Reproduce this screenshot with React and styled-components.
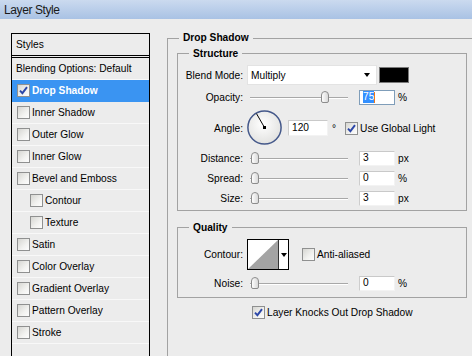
import React from 'react';
import styled, { createGlobalStyle } from 'styled-components';

const Global = createGlobalStyle`
  html, body { margin: 0; padding: 0; background: #ececec; }
  body {
    font-family: "Liberation Sans", Arial, sans-serif;
    font-size: 10.2px;
    color: #000;
  }
`;

const Window = styled.div`
  width: 472px;
  height: 356px;
  overflow: hidden;
  background: #ececec;
  display: flex;
  flex-direction: column;
`;

const TitleBar = styled.div`
  height: 19px;
  flex: none;
  display: flex;
  align-items: center;
  padding-left: 4px;
  background: linear-gradient(#cbdaef, #a9c2e4);
  font-size: 12px;
  letter-spacing: -0.4px;
  color: #1a1a1a;
`;

const Body = styled.div`
  flex: 1;
  min-height: 0;
  display: flex;
  align-items: stretch;
  padding-left: 11px;
`;

const Sidebar = styled.div`
  width: 137px;
  flex: none;
  margin-top: 14px;
  border: 1px solid #000;
  border-bottom: none;
  display: flex;
  flex-direction: column;
`;

const SidebarHeader = styled.div`
  height: 21px;
  display: flex;
  align-items: center;
  padding-left: 4px;
  border-bottom: 1px solid #000;
  margin-bottom: 1px;
`;

const StyleList = styled.div`
  flex: 1;
  border-top: 1px solid #000;
`;

const StyleItem = styled.div`
  height: 21px;
  display: flex;
  align-items: center;
  gap: 1px;
  padding-left: ${p => (p.$plain ? 4 : p.$indent ? 18 : 5)}px;
  border-bottom: 1px solid ${p => (p.$selected ? '#3a94f2' : '#f8f8f8')};
  background: ${p => (p.$selected ? '#3a94f2' : 'transparent')};
  color: ${p => (p.$selected ? '#fff' : '#000')};
  font-weight: ${p => (p.$selected ? 'bold' : 'normal')};
`;

const Box = styled.span`
  width: 13px;
  height: 13px;
  box-sizing: border-box;
  flex: none;
  border: 1px solid #8f9090;
  background: linear-gradient(135deg, #d6d6d2 0%, #f2f2f0 60%, #fdfdfd 100%);
  display: flex;
  align-items: center;
  justify-content: center;
  margin-right: ${p => p.$gap || 1}px;
`;

function Check({ checked, gap }) {
  return (
    <Box $gap={gap}>
      {checked && (
        <svg width="9" height="9" viewBox="0 0 9 9">
          <path d="M1 4.6 L3.4 7.2 L8 1.2" fill="none" stroke="#2c47a8" strokeWidth="1.9" />
        </svg>
      )}
    </Box>
  );
}

const Main = styled.div`
  margin-left: 17px;
  margin-top: 19px;
  flex: none;
  display: flex;
`;

const OuterGroup = styled.div`
  width: 330px;
  border-top: 1px solid #a2a2a2;
  border-left: 1px solid #a2a2a2;
  padding-left: 9px;
`;

const Legend = styled.div`
  width: fit-content;
  margin: -8px 0 0 ${p => (p.$inner ? 11 : 2)}px;
  margin-top: ${p => (p.$inner ? -7 : -8)}px;
  padding: 0 4px;
  line-height: 13px;
  height: 13px;
  background: #ececec;
  font-weight: bold;
`;

const Group = styled.div`
  width: 288px;
  border: 1px solid #a2a2a2;
  margin-top: ${p => p.$mt}px;
  padding-bottom: ${p => p.$pb}px;
`;

const Row = styled.div`
  display: flex;
  align-items: center;
  height: ${p => p.$h}px;
  margin-top: ${p => p.$mt}px;
`;

const Label = styled.span`
  width: 65px;
  flex: none;
  text-align: right;
`;

const Select = styled.div`
  width: 130px;
  height: 20px;
  box-sizing: border-box;
  margin-left: 4px;
  background: #fff;
  border: 1px solid #e3e3e3;
  display: flex;
  align-items: center;
  justify-content: space-between;
  padding: 0 6px 0 3px;
`;

const Caret = styled.span`
  width: 0;
  height: 0;
  border-left: 3.5px solid transparent;
  border-right: 3.5px solid transparent;
  border-top: 4px solid #000;
`;

const Swatch = styled.span`
  width: 30px;
  height: 16px;
  box-sizing: border-box;
  margin-left: 2px;
  background: #000;
  border: 1px solid #7a7a7a;
`;

const Slider = styled.div`
  position: relative;
  width: 98px;
  height: 16px;
  margin-left: 7px;
  flex: none;
  &::before {
    content: '';
    position: absolute;
    left: 0;
    right: 0;
    top: 8px;
    height: 1px;
    background: #a8a8a8;
    box-shadow: 0 1px 0 #fff;
  }
`;

const Thumb = styled.span`
  position: absolute;
  top: 2px;
  width: 8px;
  height: 12px;
  box-sizing: border-box;
  border: 1px solid #8c8c8c;
  border-radius: 4px 4px 2px 2px;
  background: linear-gradient(90deg, #fdfdfd, #d9d9d9);
`;

const Field = styled.div`
  width: ${p => p.$w || 36}px;
  height: ${p => p.$hgt || 15}px;
  box-sizing: border-box;
  margin-left: ${p => p.$ml}px;
  background: #fff;
  border: 1px solid;
  border-color: ${p => (p.$focus ? '#7f9db9' : '#c9c9c9 #f3f3f3 #f3f3f3 #cdcdcd')};
  padding-left: 3px;
  display: flex;
  align-items: center;
  line-height: 12px;
  flex: none;
`;

const Selected = styled.span`
  background: #3390ff;
  color: #fff;
`;

const TextCaret = styled.span`
  width: 1px;
  height: 11px;
  background: #f07a1a;
`;

const Unit = styled.span`
  margin-left: ${p => p.$ml || 3}px;
`;

const DialWrap = styled.div`
  width: 36px;
  height: 36px;
  margin-left: 4px;
  flex: none;
`;

const Inline = styled.label`
  display: flex;
  align-items: center;
  margin-left: ${p => p.$ml}px;
`;

const ContourPicker = styled.div`
  width: 42px;
  height: 31px;
  box-sizing: border-box;
  margin-left: 4px;
  border: 1px solid #000;
  display: flex;
  background: #fff;
  flex: none;
`;

const ContourArrow = styled.div`
  flex: 1;
  border-left: 1px solid #333;
  display: flex;
  align-items: center;
  justify-content: center;
`;

const KnockRow = styled.div`
  display: flex;
  align-items: center;
  margin: 8px 0 0 75px;
  height: 13px;
`;

const items = [
  { label: 'Blending Options: Default', plain: true },
  { label: 'Drop Shadow', checked: true, selected: true },
  { label: 'Inner Shadow' },
  { label: 'Outer Glow' },
  { label: 'Inner Glow' },
  { label: 'Bevel and Emboss' },
  { label: 'Contour', indent: true },
  { label: 'Texture', indent: true },
  { label: 'Satin' },
  { label: 'Color Overlay' },
  { label: 'Gradient Overlay' },
  { label: 'Pattern Overlay' },
  { label: 'Stroke' },
];

function SliderCtl({ value }) {
  return (
    <Slider>
      <Thumb style={{ left: `${1 + (value / 100) * 93}px` }} />
    </Slider>
  );
}

function Dial({ angle }) {
  const r = (angle * Math.PI) / 180;
  const cx = 17.5, cy = 17.5;
  const x = cx + Math.cos(r) * 16;
  const y = cy - Math.sin(r) * 16;
  return (
    <DialWrap>
      <svg width="36" height="36" viewBox="0 0 36 36">
        <defs>
          <radialGradient id="dg" cx="45%" cy="40%" r="60%">
            <stop offset="0%" stopColor="#ffffff" />
            <stop offset="100%" stopColor="#e2e2e0" />
          </radialGradient>
        </defs>
        <circle cx={cx} cy={cy} r="16.6" fill="url(#dg)" stroke="#44588a" strokeWidth="1.5" />
        <line x1={cx} y1={cy} x2={x} y2={y} stroke="#000" strokeWidth="1" />
        <rect x={cx - 1.5} y={cy - 1.5} width="3" height="3" fill="#000" />
      </svg>
    </DialWrap>
  );
}

export default function App() {
  return (
    <>
      <Global />
      <Window>
        <TitleBar>Layer Style</TitleBar>
        <Body>
          <Sidebar>
            <SidebarHeader>Styles</SidebarHeader>
            <StyleList>
              {items.map(it => (
                <StyleItem key={it.label} $plain={it.plain} $indent={it.indent} $selected={it.selected}>
                  {!it.plain && <Check checked={it.checked} />}
                  {it.label}
                </StyleItem>
              ))}
            </StyleList>
          </Sidebar>
          <Main>
            <OuterGroup>
              <Legend>Drop Shadow</Legend>
              <Group $mt={9} $pb={4}>
                <Legend $inner>Structure</Legend>
                <Row $mt={5} $h={20}>
                  <Label>Blend Mode:</Label>
                  <Select>
                    Multiply
                    <Caret />
                  </Select>
                  <Swatch />
                </Row>
                <Row $mt={4} $h={16}>
                  <Label>Opacity:</Label>
                  <SliderCtl value={75} />
                  <Field $ml={11} $focus>
                    <Selected>75</Selected>
                    <TextCaret />
                  </Field>
                  <Unit>%</Unit>
                </Row>
                <Row $mt={5} $h={36}>
                  <Label>Angle:</Label>
                  <Dial angle={120} />
                  <Field $ml={5} $w={40} $hgt={16}>120</Field>
                  <Unit $ml={4}>°</Unit>
                  <Inline $ml={9}>
                    <Check checked gap={2} />
                    Use Global Light
                  </Inline>
                </Row>
                <Row $mt={4} $h={16}>
                  <Label>Distance:</Label>
                  <SliderCtl value={0} />
                  <Field $ml={11}>3</Field>
                  <Unit>px</Unit>
                </Row>
                <Row $mt={4} $h={16}>
                  <Label>Spread:</Label>
                  <SliderCtl value={0} />
                  <Field $ml={11}>0</Field>
                  <Unit>%</Unit>
                </Row>
                <Row $mt={4} $h={16}>
                  <Label>Size:</Label>
                  <SliderCtl value={0} />
                  <Field $ml={11}>3</Field>
                  <Unit>px</Unit>
                </Row>
              </Group>
              <Group $mt={16} $pb={6}>
                <Legend $inner>Quality</Legend>
                <Row $mt={5} $h={31}>
                  <Label>Contour:</Label>
                  <ContourPicker>
                    <svg width="30" height="29" viewBox="0 0 30 29">
                      <polygon points="0,29 30,0 30,29" fill="#a4a4a4" />
                    </svg>
                    <ContourArrow>
                      <Caret />
                    </ContourArrow>
                  </ContourPicker>
                  <Inline $ml={13}>
                    <Check gap={2} />
                    Anti-aliased
                  </Inline>
                </Row>
                <Row $mt={5} $h={16}>
                  <Label>Noise:</Label>
                  <SliderCtl value={0} />
                  <Field $ml={11}>0</Field>
                  <Unit>%</Unit>
                </Row>
              </Group>
              <KnockRow>
                <Check checked gap={2} />
                Layer Knocks Out Drop Shadow
              </KnockRow>
            </OuterGroup>
          </Main>
        </Body>
      </Window>
    </>
  );
}
